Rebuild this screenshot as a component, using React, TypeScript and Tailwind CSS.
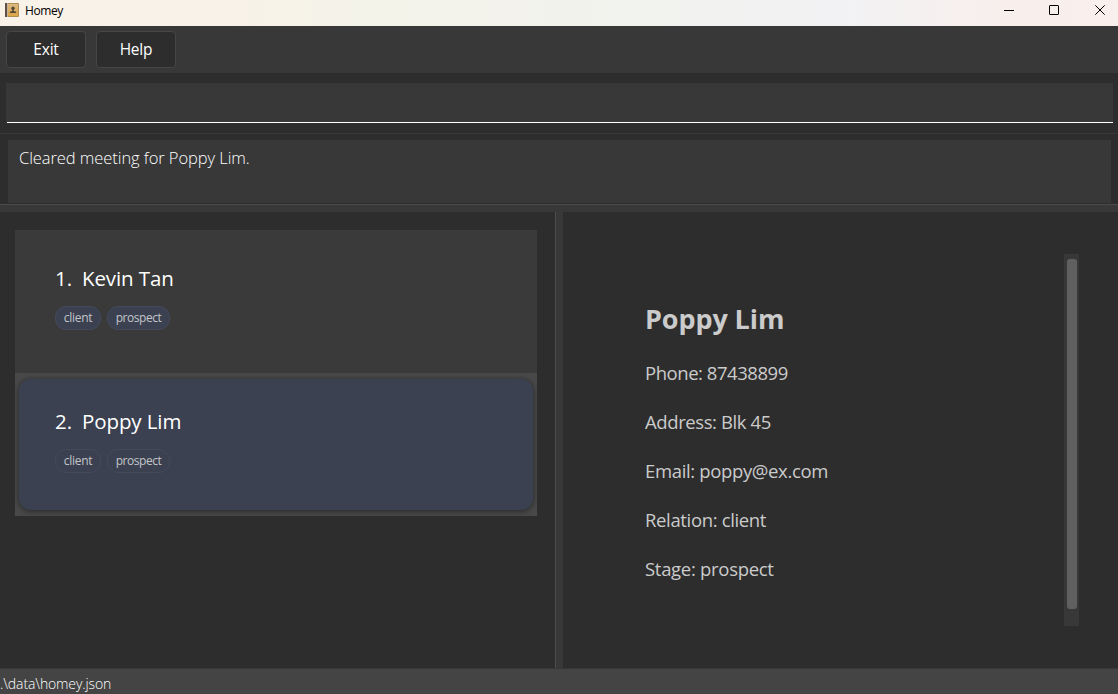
const people = [
  { id: 1, name: "Kevin Tan", tags: ["client", "prospect"], selected: false },
  { id: 2, name: "Poppy Lim", tags: ["client", "prospect"], selected: true },
];

const details = [
  { text: "Phone: 87438899", fit: "tracking-[-0.45px]" },
  { text: "Address: Blk 45", fit: "tracking-[-0.4px]" },
  { text: "Email: poppy@ex.com", fit: "tracking-[-0.35px]" },
  { text: "Relation: client", fit: "tracking-[-0.35px]" },
  { text: "Stage: prospect", fit: "tracking-[-0.3px]" },
];

function BookIcon() {
  return (
    <svg className="ml-[5px] mt-[3px] h-[14px] w-[14px] shrink-0" viewBox="0 0 14 14">
      <defs>
        <linearGradient id="cover" x1="0" y1="0" x2="0" y2="1">
          <stop offset="0" stopColor="#d9b984" />
          <stop offset="1" stopColor="#dda544" />
        </linearGradient>
      </defs>
      <rect width="14" height="14" rx="1" fill="#b18b50" />
      <rect x="3" y="1" width="10" height="12" fill="url(#cover)" />
      <rect width="2" height="14" fill="#5f5148" />
      <rect x="2" width="1" height="14" fill="#c5b197" />
      <circle cx="8" cy="5.3" r="1.7" fill="#57483a" />
      <path d="M7.2 6h1.6v2l2.4.8V10H4.8V8.800l2.400-.8z" fill="#57483a" />
    </svg>
  );
}

function TitleBar() {
  return (
    <header className="flex h-[26px] shrink-0 bg-[linear-gradient(90deg,#f9f2e9_0%,#f8f2e8_20%,#f4f3e9_32%,#f2f2ee_55%,#f2f2f4_75%,#f8efed_90%,#f9efed_100%)] text-black">
      <BookIcon />
      <span className="ml-[6px] mt-[2px] text-[12px] leading-[18px] tracking-[-0.4px]">Homey</span>
      <svg className="ml-auto h-[26px] w-[118px]" viewBox="0 0 118 26" fill="none" stroke="#000">
        <path d="M4 10.500h10" />
        <rect x="49.500" y="5.500" width="9" height="9" rx="0.500" />
        <path d="M95.300 5.300l9.400 9.400M104.700 5.300l-9.400 9.400" />
      </svg>
    </header>
  );
}

function ToolButton({ label }: { label: string }) {
  return (
    <button className="flex h-[37px] w-[80px] items-center justify-center rounded-[4px] border border-[#464646] bg-[#2d2d2d] pb-[2px] text-[15.500px] font-[370] leading-5 tracking-[-0.2px] text-white">
      {label}
    </button>
  );
}

function Tag({ label }: { label: string }) {
  return (
    <span
      className={`flex h-6 items-center justify-center rounded-[11px] border border-[#444a5c] bg-[#3b4150] text-[12px] leading-4 text-[#c3c5ca] ${
        label === "client" ? "w-[46px] tracking-[-0.3px]" : "w-[63px] tracking-[-0.45px]"
      }`}
    >
      {label}
    </span>
  );
}

function PersonContent({ id, name, tags }: { id: number; name: string; tags: string[] }) {
  return (
    <>
      <div className="flex h-[28px] items-center text-[20.500px] font-[370] leading-7 text-white">
        <span className="w-[27px]">{id}.</span>
        <span className="tracking-[-0.1px]">{name}</span>
      </div>
      <div className="mt-[14px] flex gap-[6px]">
        {tags.map((t) => (
          <Tag key={t} label={t} />
        ))}
      </div>
    </>
  );
}

export default function App() {
  return (
    <div className="flex h-[694px] w-[1118px] flex-col overflow-hidden bg-[#2d2d2d] font-['Open_Sans','Noto_Sans',sans-serif]">
      <TitleBar />
      <nav className="flex h-[47px] shrink-0 gap-[10px] bg-[#383838] pl-[6px] pt-[5px]">
        <ToolButton label="Exit" />
        <ToolButton label="Help" />
      </nav>
      <section className="h-[60px] shrink-0 pl-[6px] pr-[5px] pt-[10px]">
        <div className="flex h-10 flex-col justify-end bg-[#383838] pl-px">
          <div className="h-px bg-white" />
        </div>
      </section>
      <section className="h-[71px] shrink-0 border-t border-[#383838] pl-2 pr-[7px] pt-[6px]">
        <div className="h-[63px] bg-[#383838] pl-[11px] pt-[6px] text-[16.500px] font-light leading-6 tracking-[-0.07px] text-white">
          Cleared meeting for Poppy Lim.
        </div>
      </section>
      <div className="h-2 shrink-0 border-t border-[#4b4b4b] bg-[#383838]" />
      <main className="flex h-[456px] shrink-0">
        <div className="w-[555px] pl-[15px] pr-[18px] pt-[18px]">
          {people.map((p) =>
            p.selected ? (
              <div key={p.id} className="h-[143px] overflow-hidden bg-[#494949] px-1 pb-[6px] pt-[6px]">
                <div className="h-[131px] rounded-[12px] bg-[#3b4150] pl-9 pt-[28px] shadow-[0_1px_6px_rgba(0,0,0,0.5)]">
                  <PersonContent {...p} />
                </div>
              </div>
            ) : (
              <div key={p.id} className="h-[143px] bg-[#3a3a3a] pl-10 pt-[34px]">
                <PersonContent {...p} />
              </div>
            ),
          )}
        </div>
        <div className="w-2 shrink-0 border-l border-[#4b4b4b] bg-[#383838]" />
        <div className="flex grow justify-between pl-[82px] pr-[39px] pt-[42px] text-[#cbcbcb]">
          <div className="pt-[45px]">
            <h1 className="h-10 whitespace-nowrap text-[27px] font-bold leading-10 tracking-[-0.1px]">Poppy Lim</h1>
            <div className="mt-[20px] flex flex-col gap-[21px] text-[18.500px] font-[380] leading-7">
              {details.map((d) => (
                <p key={d.text} className={`whitespace-nowrap ${d.fit}`}>
                  {d.text}
                </p>
              ))}
            </div>
          </div>
          <div className="h-[372px] w-[15px] bg-[#383838] pl-[3px] pt-[5px]">
            <div className="h-[350px] w-[10px] rounded-[3px] bg-[#606060]" />
          </div>
        </div>
      </main>
      <footer className="h-[26px] shrink-0 border-t border-[#383838] bg-[#444444] pt-[5px] text-[14px] font-light leading-5 tracking-[-0.12px] text-white">
        .\data\homey.json
      </footer>
    </div>
  );
}
